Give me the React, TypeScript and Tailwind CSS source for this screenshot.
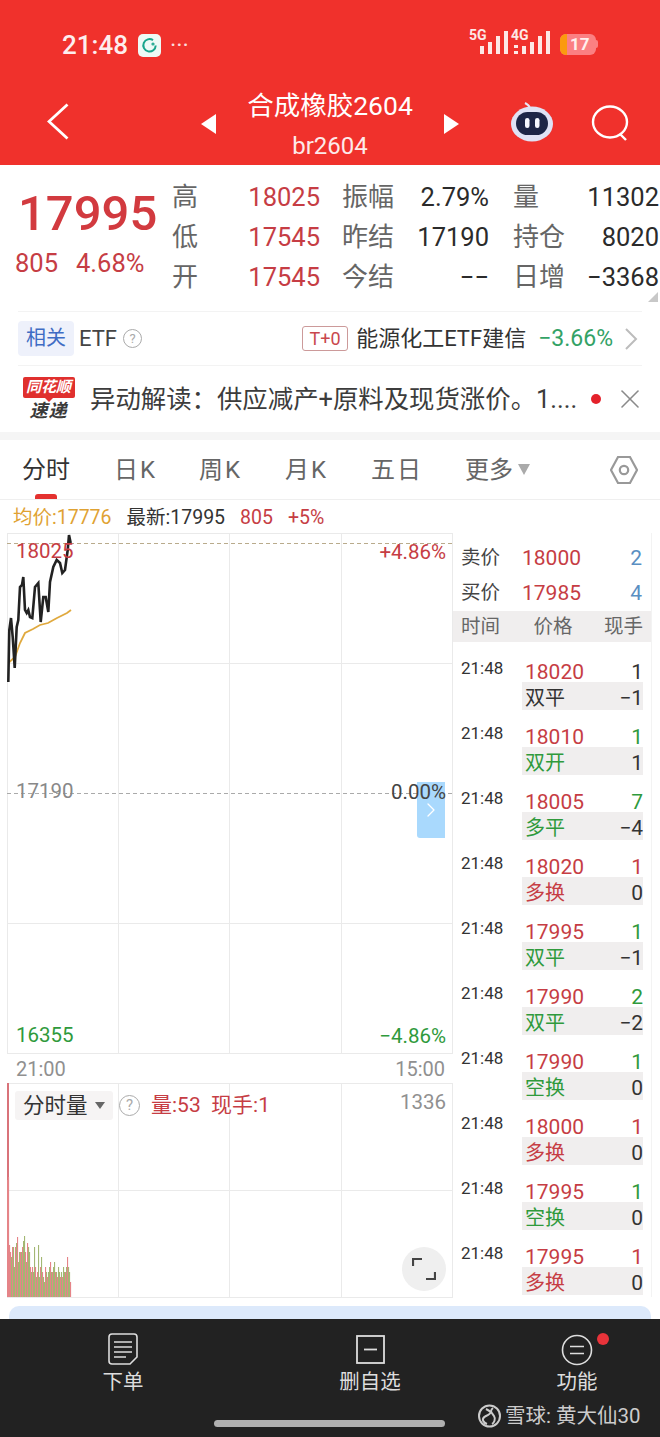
import React from 'react';
import { ChevronRight, X } from 'lucide-react';

const RED = 'text-[#c63d44]';
const GREEN = 'text-[#2f9a3c]';
const DARK = 'text-[#333333]';

const QUOTE_ROWS: [string, string, string][][] = [
  [['高', '18025', RED], ['振幅', '2.79%', 'text-[#2b2b2b]'], ['量', '11302', 'text-[#2b2b2b]']],
  [['低', '17545', RED], ['昨结', '17190', 'text-[#2b2b2b]'], ['持仓', '8020', 'text-[#2b2b2b]']],
  [['开', '17545', RED], ['今结', '−−', 'text-[#2b2b2b]'], ['日增', '−3368', 'text-[#2b2b2b]']],
];

const TABS = [
  { label: '日K', w: 'w-[85px]' },
  { label: '周K', w: 'w-[86px]' },
  { label: '月K', w: 'w-[86px]' },
  { label: '五日', w: 'w-[94px]' },
];

const TRADES = [
  { price: '18020', qty: '1', qtyColor: DARK, tag: '双平', tagColor: DARK, net: '−1' },
  { price: '18010', qty: '1', qtyColor: GREEN, tag: '双开', tagColor: GREEN, net: '1' },
  { price: '18005', qty: '7', qtyColor: GREEN, tag: '多平', tagColor: GREEN, net: '−4' },
  { price: '18020', qty: '1', qtyColor: RED, tag: '多换', tagColor: RED, net: '0' },
  { price: '17995', qty: '1', qtyColor: GREEN, tag: '双平', tagColor: GREEN, net: '−1' },
  { price: '17990', qty: '2', qtyColor: GREEN, tag: '双平', tagColor: GREEN, net: '−2' },
  { price: '17990', qty: '1', qtyColor: GREEN, tag: '空换', tagColor: GREEN, net: '0' },
  { price: '18000', qty: '1', qtyColor: RED, tag: '多换', tagColor: RED, net: '0' },
  { price: '17995', qty: '1', qtyColor: GREEN, tag: '空换', tagColor: GREEN, net: '0' },
  { price: '17995', qty: '1', qtyColor: RED, tag: '多换', tagColor: RED, net: '0' },
];

// traced from the reference, local to the chart box (origin 7,533)
const PRICE_LINE =
  '1.3,149 2.3,97 4,85 5.7,104 7.7,135 9.7,94 11.3,87 13,54 15,52 16.3,44 18,77 19.7,80 21.3,77 23,84 25.3,85 28,54 31.3,50 33.7,89 36.3,64 38.7,64 41.3,79 43,49 46.3,34 49.7,27 53,30 55.3,40 58,37 60.7,17 62,2 63.7,10';
const AVG_LINE =
  '1.3,130 8,124 13,110 18,100 26,96 33,92 41,90 50,85 60,80 64,77';

const VOL = [
  214, 120, 52, 45, 40, 50, 50, 30, 50, 54, 60, 35, 45, 45, 45, 50, 56, 61, 45, 35,
  54, 50, 45, 30, 25, 30, 25, 50, 30, 20, 25, 52, 20, 30, 40, 25, 20, 15, 30, 25,
  20, 25, 30, 35, 25, 25, 30, 35, 25, 25, 20, 30, 25, 20, 25, 20, 30, 25, 25, 30, 40, 30, 25, 15,
];

const Help: React.FC<{ size: string; text: string }> = ({ size, text }) => (
  <span className={`${size} ${text} rounded-full border border-[#aaaaaa] text-[#aaaaaa] flex items-center justify-center shrink-0`}>?</span>
);

const Signal: React.FC<{ label: string; arrows?: boolean }> = ({ label, arrows }) => (
  <div className="relative w-[37px] h-[26px]">
    <span className="absolute left-[-2px] top-[-4px] text-[14px] leading-[16px] font-bold text-[#fde8e6]">{label}</span>
    <svg width="37" height="26" viewBox="0 0 37 26" className="absolute left-0 top-0" fill="#fde8e6">
      {arrows && <rect x="1" y="14" width="4" height="3" />}
      {arrows && <rect x="1" y="20" width="4" height="3" />}
      <rect x="9" y="15" width="4" height="8" />
      <rect x="17" y="11" width="4" height="12" />
      <rect x="25" y="5" width="4" height="18" />
      <rect x="33" y="0" width="4" height="23" />
    </svg>
  </div>
);

const Header: React.FC = () => (
  <div className="bg-[#f0312c] h-[165px] text-white">
    {/* status bar */}
    <div className="h-[90px] flex items-center pb-0 pl-[62px] pr-[62px]">
      <span className="text-[26px] leading-[32px] font-medium text-[#fdeeee]">21:48</span>
      <div className="ml-[10px] w-[23px] h-[23px] rounded-[5px] bg-[#eefaf6] flex items-center justify-center">
        <svg width="17" height="17" viewBox="0 0 17 17" fill="none" stroke="#18a58c" strokeWidth="2">
          <path d="M12 3.2A6.2 6.2 0 1 0 14.7 8.5" />
          <circle cx="12" cy="7" r="0.6" />
        </svg>
      </div>
      <span className="ml-[9px] text-[24px] leading-[24px] tracking-[0px] text-[#fbdcdc]">···</span>
      <div className="ml-auto flex items-center gap-[5px] -mt-[2px]">
        <Signal label="5G" />
        <Signal label="4G" arrows />
        <div className="ml-[5px] flex items-center">
          <div className="w-[36px] h-[21px] rounded-[6px] bg-[#fb8082] overflow-hidden flex items-center">
            <div className="w-[7px] h-full bg-[#fb9a0e]" />
            <span className="ml-[3px] text-[17px] leading-[21px] font-bold text-[#fff0ee]">17</span>
          </div>
          <div className="w-[2px] h-[8px] rounded-r-sm bg-[#fb8082]" />
        </div>
      </div>
    </div>
    {/* nav */}
    <div className="h-[75px] relative flex items-center">
      <svg className="absolute left-[47px] top-[13px]" width="23" height="37" viewBox="0 0 23 37" fill="none" stroke="white" strokeWidth="2.8">
        <path d="M20.5 1.5L2 18.5l18.5 17" />
      </svg>
      <div className="ml-[201px] mt-[-8px] w-0 h-0 border-y-[10px] border-y-transparent border-r-[15px] border-r-white" />
      <div className="w-[228px] flex flex-col items-center -mt-[7px]">
        <span className="text-[26.5px] leading-[36px]">合成橡胶2604</span>
        <span className="text-[24px] leading-[28px] mt-[8px] text-[#fdeaea]">br2604</span>
      </div>
      <div className="mt-[-8px] w-0 h-0 border-y-[10px] border-y-transparent border-l-[15px] border-l-white" />
      <svg className="absolute left-[510px] top-[12px]" width="44" height="40" viewBox="0 0 44 40">
        <path d="M20 6C19 3 17 2 15 1" stroke="#e8e6f5" strokeWidth="2" fill="none" />
        <ellipse cx="22" cy="22" rx="21" ry="17.5" fill="#dfe2f5" />
        <rect x="6" y="10" width="32" height="23" rx="11.5" fill="#1d2547" />
        <rect x="15" y="16" width="4.5" height="10" rx="2.2" fill="#f5f7ff" />
        <rect x="25" y="16" width="4.5" height="10" rx="2.2" fill="#f5f7ff" />
      </svg>
      <svg className="absolute left-[590px] top-[13px]" width="42" height="42" viewBox="0 0 42 42" fill="none" stroke="white" strokeWidth="2.4">
        <ellipse cx="20" cy="19" rx="17" ry="15.5" />
        <path d="M30 31l6 6" />
      </svg>
    </div>
  </div>
);

const Quote: React.FC = () => (
  <div className="relative h-[146px] bg-white flex pt-[12px]">
    <div className="w-[172px] shrink-0 pl-[15px]">
      <div className="ml-[3px] mt-[7px] text-[49px] leading-[60px] font-medium text-[#d23a3f]">17995</div>
      <div className={`flex gap-[18px] text-[25.5px] leading-[30px] mt-[4px] ${RED}`}>
        <span>805</span>
        <span>4.68%</span>
      </div>
    </div>
    <div className="flex-1 min-w-0 flex flex-col">
      {QUOTE_ROWS.map((row, i) => (
        <div key={i} className="flex h-[40px] items-center">
          {row.map(([label, value, color], j) => (
            <div
              key={label}
              className={`flex items-center justify-between ${j === 0 ? 'w-[148px]' : j === 1 ? 'w-[147px] ml-[22px]' : 'w-[146px] ml-[24px]'}`}
            >
              <span className="text-[26px] leading-[32px] text-[#666666]">{label}</span>
              <span className={`text-[25.5px] leading-[32px] ${color}`}>{value}</span>
            </div>
          ))}
        </div>
      ))}
    </div>
    <div className="absolute right-[2px] bottom-[9px] w-0 h-0 border-b-[10px] border-b-[#c8c8c8] border-l-[10px] border-l-transparent" />
  </div>
);

const EtfRow: React.FC = () => (
  <div className="h-[55px] mx-[18px] border-t border-[#f3f3f3] border-b flex items-center">
    <span className="w-[56px] h-[35px] rounded-[4px] bg-[#eef1fb] text-[#3f6cc4] text-[20px] leading-[35px] text-center">相关</span>
    <span className="ml-[5px] text-[22px] leading-[28px] text-[#444444]">ETF</span>
    <Help size="w-[19px] h-[19px] ml-[6px]" text="text-[13px]" />
    <span className="ml-auto w-[46px] h-[25px] rounded-[3px] border border-[#cc9a9a] text-[#c9474d] text-[18px] leading-[23px] text-center">T+0</span>
    <span className="ml-[8px] text-[22px] leading-[28px] text-[#333333]">能源化工ETF建信</span>
    <span className="ml-[12px] text-[23px] leading-[28px] text-[#33a266]">−3.66%</span>
    <svg className="ml-[11px] mr-[4px]" width="14" height="22" viewBox="0 0 14 22" fill="none" stroke="#bcbcbc" strokeWidth="2">
      <path d="M2 1l10 10L2 21" />
    </svg>
  </div>
);

const NewsRow: React.FC = () => (
  <div className="h-[66px] flex items-center pl-[22px] pr-[14px] bg-white">
    <div className="w-[53px] shrink-0 flex flex-col items-center">
      <div className="relative w-[52px] h-[21px] bg-[#e0302e] rounded-[2px] text-white text-[15px] leading-[21px] font-bold italic text-center whitespace-nowrap">
        同花顺
        <div className="absolute left-[22px] top-[21px] w-0 h-0 border-x-[4px] border-x-transparent border-t-[4px] border-t-[#e0302e]" />
      </div>
      <span className="mt-[3px] text-[18px] leading-[20px] font-bold italic text-[#3a3a3a] tracking-[1px]">速递</span>
    </div>
    <span className="ml-[15px] text-[25.4px] leading-[32px] text-[#3c3c3c] whitespace-nowrap">异动解读：供应减产+原料及现货涨价。1....</span>
    <span className="ml-auto w-[10px] h-[10px] rounded-full bg-[#e4212b] shrink-0" />
    <X className="ml-[13px] w-[32px] h-[32px] text-[#8a8a8a] shrink-0" strokeWidth={1.2} />
  </div>
);

const Tabs: React.FC = () => (
  <div className="relative h-[60px] bg-white flex items-center border-b border-[#efefef] pl-[22px] text-[24px] text-[#666666]">
    <div className="w-[92px] text-[#333333] leading-[32px]">分时</div>
    {TABS.map(t => (
      <div key={t.label} className={`${t.w} leading-[32px] tracking-[2px]`}>{t.label}</div>
    ))}
    <div className="flex items-center leading-[32px]">
      更多
      <span className="ml-[5px] w-0 h-0 border-x-[6px] border-x-transparent border-t-[11px] border-t-[#aaaaaa]" />
    </div>
    <svg className="ml-auto mr-[22px]" width="28" height="30" viewBox="0 0 28 30" fill="none" stroke="#999999" strokeWidth="2.2">
      <path d="M8 2h12l7 13-7 13H8L1 15z" />
      <circle cx="14" cy="15" r="4.2" />
    </svg>
    <div className="absolute left-[35px] bottom-0 w-[22px] h-[5px] rounded-t-[3px] bg-[#e4312f]" />
  </div>
);

const MainChart: React.FC = () => (
  <div className="relative h-[520px] overflow-visible">
    <svg className="absolute inset-0 overflow-visible" width="446" height="521" viewBox="0 0 446 521" fill="none">
      <g stroke="#eaeaea" strokeWidth="1">
        <path d="M0.5 0V520M111.5 0V520M222.5 0V520M334.5 0V520M445.5 0V520" />
        <path d="M0 0.5H446M0 130.5H446M0 390.5H446M0 520.5H446" />
      </g>
      <path d="M0 10.5H446" stroke="#b9ab8c" strokeWidth="1" strokeDasharray="4 3" />
      <path d="M0 260.5H446" stroke="#aaaaaa" strokeWidth="1" strokeDasharray="4 3" />
      <polyline points={AVG_LINE} stroke="#e0a93e" strokeWidth="1.8" />
      <polyline points={PRICE_LINE} stroke="#222222" strokeWidth="2.6" />
    </svg>
    <div className="absolute left-[410px] top-[249px] w-[28px] h-[56px] bg-[#a9d9fd] rounded-bl-[3px] flex items-center justify-center">
      <ChevronRight className="w-[24px] h-[30px] text-white" strokeWidth={1.3} />
    </div>
    <span className={`absolute left-[9px] top-[5px] text-[20.5px] leading-[26px] ${RED}`}>18025</span>
    <span className={`absolute right-[7px] top-[6px] text-[20.5px] leading-[26px] ${RED}`}>+4.86%</span>
    <span className="absolute left-[9px] top-[245px] text-[20.5px] leading-[26px] text-[#888888]">17190</span>
    <span className="absolute right-[7px] top-[246px] text-[20.5px] leading-[26px] text-[#444444]">0.00%</span>
    <span className={`absolute left-[9px] top-[489px] text-[20.5px] leading-[26px] ${GREEN}`}>16355</span>
    <span className={`absolute right-[7px] top-[490px] text-[20.5px] leading-[26px] ${GREEN}`}>−4.86%</span>
  </div>
);

const VolumeChart: React.FC = () => (
  <div className="relative h-[214px]">
    <svg className="absolute inset-0" width="446" height="215" viewBox="0 0 446 215" fill="none">
      <path d="M0.5 0V214M111.5 0V214M222.5 0V214M334.5 0V214M445.5 0V214" stroke="#eaeaea" />
      <path d="M0 0.5H446M0 107.5H446M0 214.5H446" stroke="#eaeaea" />
      <path d="M1 0V97" stroke="#d9737a" strokeWidth="2" />
      {VOL.map((h, i) => {
        const red = i < 3 || (i * 7) % 5 < 2;
        const height = i === 0 ? 117 : h;
        return <rect key={i} x={i} y={214 - height} width="1.1" height={height} fill={red ? '#e58488' : '#a3b773'} />;
      })}
    </svg>
    <div className="absolute left-[8px] top-[8px] w-[98px] h-[29px] rounded-[3px] bg-[#f6f4f4] flex items-center pl-[8px] text-[21.5px] leading-[29px] text-[#333333]">
      分时量
      <span className="ml-[7px] w-0 h-0 border-x-[5px] border-x-transparent border-t-[7px] border-t-[#666666]" />
    </div>
    <Help size="absolute left-[112px] top-[12px] w-[21px] h-[21px]" text="text-[15px]" />
    <span className={`absolute left-[144px] top-[9px] text-[21px] leading-[27px] whitespace-pre ${RED}`}>量:53  现手:1</span>
    <span className="absolute right-[7px] top-[6px] text-[20.5px] leading-[26px] text-[#909090]">1336</span>
    <div className="absolute left-[395px] top-[164px] w-[44px] h-[44px] rounded-full bg-[#efefef] flex items-center justify-center">
      <svg width="24" height="24" viewBox="0 0 24 24" fill="none" stroke="#444444" strokeWidth="2.2">
        <path d="M1 9V2h9M23 15v7h-9" />
      </svg>
    </div>
  </div>
);

const TradePanel: React.FC = () => (
  <div className="w-[199px] border-r border-[#f3f3f3] overflow-hidden">
    <div className="h-[78px] pt-[7px]">
      {[
        ['卖价', '18000', '2'],
        ['买价', '17985', '4'],
      ].map(([label, price, qty]) => (
        <div key={label} className="flex items-center h-[35px] pl-[8px] pr-[9px]">
          <span className="w-[61px] text-[19.5px] text-[#444444] leading-[28px]">{label}</span>
          <span className={`text-[21px] leading-[28px] ${RED}`}>{price}</span>
          <span className="ml-auto text-[21px] leading-[28px] text-[#5a8fc2]">{qty}</span>
        </div>
      ))}
    </div>
    <div className="h-[31px] bg-[#f0eeee] flex items-center justify-between pl-[8px] pr-[8px] text-[19.5px] leading-[31px] text-[#666666]">
      <span>时间</span>
      <span className="ml-[2px]">价格</span>
      <span>现手</span>
    </div>
    <div className="pt-[18px] flex flex-col gap-[10px]">
      {TRADES.map((t, i) => (
        <div key={i} className="flex h-[55px]">
          <span className="w-[69px] pl-[8px] text-[17px] leading-[17px] text-[#333333]">21:48</span>
          <div className="w-[121px] flex flex-col">
            <div className="h-[22px] pt-[2px] flex items-center justify-between pl-[3px] text-[21px] leading-[20px]">
              <span className={RED}>{t.price}</span>
              <span className={t.qtyColor}>{t.qty}</span>
            </div>
            <div className="h-[28px] pt-[5px] bg-[#f0eeee] flex items-center justify-between pl-[3px] leading-[23px]">
              <span className={`text-[20px] ${t.tagColor}`}>{t.tag}</span>
              <span className="text-[21px] text-[#333333]">{t.net}</span>
            </div>
          </div>
        </div>
      ))}
    </div>
  </div>
);

const BottomBar: React.FC = () => (
  <div className="relative h-[118px] bg-[#222222] text-[#dddddd]">
    <div className="flex h-[95px]">
      <div className="w-[246px] pt-[14px] flex flex-col items-center">
        <svg width="30" height="32" viewBox="0 0 30 32" fill="none" stroke="#dddddd" strokeWidth="1.6">
          <path d="M4 1h22a3 3 0 0 1 3 3v20l-7 7H4a3 3 0 0 1-3-3V4a3 3 0 0 1 3-3z" />
          <path d="M6 9h18M6 14h18M6 19h18M6 24h12" />
        </svg>
        <span className="mt-[3px] text-[20.5px] leading-[28px]">下单</span>
      </div>
      <div className="w-[248px] pt-[16px] flex flex-col items-center">
        <svg width="29" height="29" viewBox="0 0 29 29" fill="none" stroke="#dddddd" strokeWidth="1.8">
          <rect x="1" y="1" width="27" height="27" />
          <path d="M8 14.5h13" />
        </svg>
        <span className="mt-[4px] text-[20.5px] leading-[28px]">删自选</span>
      </div>
      <div className="relative w-[166px] pt-[15px] flex flex-col items-center">
        <svg width="32" height="32" viewBox="0 0 32 32" fill="none" stroke="#dddddd" strokeWidth="1.6">
          <circle cx="16" cy="16" r="14.5" />
          <path d="M9 12.5h14M9 19.5h14" />
        </svg>
        <span className="mt-[2px] text-[20.5px] leading-[28px]">功能</span>
        <span className="absolute left-[103px] top-[14px] w-[12px] h-[12px] rounded-full bg-[#e8333a]" />
      </div>
    </div>
    <div className="w-[231px] h-[7px] mt-[6px] ml-[214px] rounded-full bg-[#b0b0b0]" />
    <div className="absolute left-[478px] top-[84px] flex items-center text-[#cccccc]">
      <svg width="23" height="24" viewBox="0 0 23 24" fill="none" stroke="#cccccc" strokeWidth="2">
        <circle cx="11.5" cy="12" r="10.5" />
        <path d="M8 5c6 3 6 4 0 7s-2 7 1 8M15 4c-4 3-1 5 1 8s0 7-2 8" />
      </svg>
      <span className="ml-[4px] text-[20.5px] leading-[26px] whitespace-pre">雪球: 黄大仙30</span>
    </div>
  </div>
);

export default function App() {
  return (
    <div className="w-[660px] h-[1437px] overflow-hidden bg-white font-['Roboto','Noto_Sans_CJK_SC',sans-serif]">
      <Header />
      <Quote />
      <EtfRow />
      <NewsRow />
      <div className="h-[8px] bg-[#f5f5f5]" />
      <Tabs />

      <div className="h-[33px] pt-[2px] flex items-center pl-[13px] text-[19.5px] leading-[26px] whitespace-nowrap">
        <span className="text-[#dfa233]">均价:17776</span>
        <span className="ml-[15px] text-[#333333]">最新:17995</span>
        <span className={`ml-[15px] ${RED}`}>805</span>
        <span className={`ml-[15px] ${RED}`}>+5%</span>
      </div>

      <div className="flex h-[764px]">
        <div className="ml-[7px] w-[446px] shrink-0">
          <MainChart />
          <div className="h-[30px] pt-[3px] flex items-center justify-between pl-[9px] pr-[8px] text-[20px] leading-[27px] text-[#909090]">
            <span>21:00</span>
            <span>15:00</span>
          </div>
          <VolumeChart />
        </div>
        <TradePanel />
      </div>

      <div className="h-[22px] pt-[9px] px-[9px]">
        <div className="h-[13px] rounded-t-[10px] bg-[#dce9fb]" />
      </div>
      <BottomBar />
    </div>
  );
}
